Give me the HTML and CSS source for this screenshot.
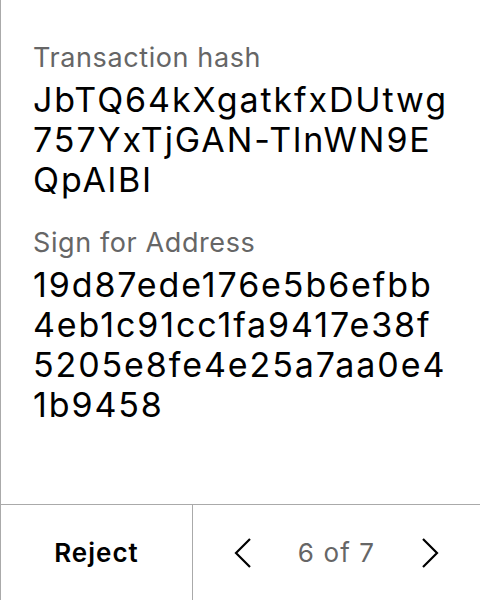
FILE: index.html
```html
<!DOCTYPE html>
<html>
<head>
<meta charset="utf-8">
<link rel="stylesheet" href="styles.css">
</head>
<body>
<div class="screen">
  <main class="content">
    <section class="field">
      <div class="label">Transaction hash</div>
      <div class="value">JbTQ64kXgatkfxDUtwg<br>757YxTjGAN-TlnWN9E<br>QpAlBI</div>
    </section>
    <section class="field">
      <div class="label">Sign for Address</div>
      <div class="value">19d87ede176e5b6efbb<br>4eb1c91cc1fa9417e38f<br>5205e8fe4e25a7aa0e4<br>1b9458</div>
    </section>
  </main>
  <footer class="footer">
    <div class="reject">Reject</div>
    <div class="pager">
      <svg class="chev" viewBox="0 0 32 32" width="32" height="32"><path d="M23 2 L9 16 L23 30" fill="none" stroke="#000" stroke-width="2.2"/></svg>
      <span class="count">6 of 7</span>
      <svg class="chev" viewBox="0 0 32 32" width="32" height="32"><path d="M9 2 L23 16 L9 30" fill="none" stroke="#000" stroke-width="2.2"/></svg>
    </div>
  </footer>
</div>
</body>
</html>
```
FILE: styles.css
```css
html, body {
  margin: 0;
  padding: 0;
  background: #fff;
}
body {
  font-family: Inter, "Noto Sans", sans-serif;
  color: #000;
}
.screen {
  width: 479px;
  height: 600px;
  border-left: 1px solid #aaa;
  display: flex;
  flex-direction: column;
}
.content {
  flex: 1;
  padding: 42px 0 0 32px;
  display: flex;
  flex-direction: column;
  gap: 27px;
}
.label {
  font-size: 27px;
  line-height: 32px;
  letter-spacing: 0.6px;
  color: #666;
}
.value {
  font-size: 34px;
  line-height: 40px;
  letter-spacing: 1.9px;
  margin-top: 6px;
  white-space: nowrap;
}
.footer {
  height: 95px;
  border-top: 1px solid #aaa;
  display: flex;
}
.reject {
  width: 191px;
  border-right: 1px solid #aaa;
  display: flex;
  align-items: center;
  justify-content: center;
  font-size: 26px;
  letter-spacing: 1px;
  font-weight: 600;
}
.pager {
  flex: 1;
  display: flex;
  align-items: center;
  justify-content: space-between;
  padding: 0 34px;
}
.chev {
  display: block;
}
.count {
  font-size: 26px;
  letter-spacing: 1.1px;
  color: #666;
}
```
